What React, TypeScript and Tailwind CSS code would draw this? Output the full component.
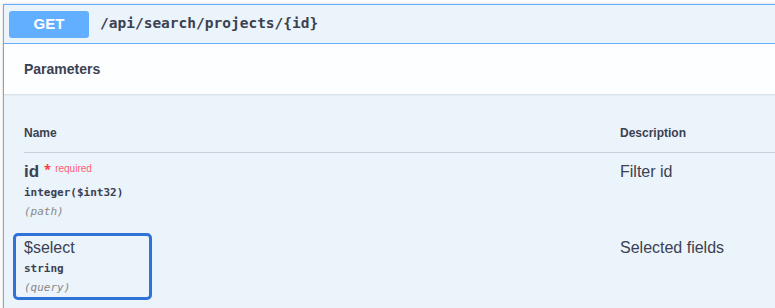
import React from 'react';

const sans = { fontFamily: '"Liberation Sans", Arial, sans-serif' };
const mono = { fontFamily: '"DejaVu Sans Mono", monospace' };

interface Param {
  name: string;
  required?: boolean;
  type: string;
  location: string;
  description: string;
  highlighted?: boolean;
}

const params: Param[] = [
  { name: 'id', required: true, type: 'integer($int32)', location: '(path)', description: 'Filter id' },
  { name: '$select', type: 'string', location: '(query)', description: 'Selected fields', highlighted: true },
];

const ParamRow: React.FC<{ param: Param }> = ({ param }) => (
  <div className="grid grid-cols-[596px_1fr] pt-[9px] pb-[9px]">
    <div className="relative">
      {param.highlighted && (
        <div className="absolute left-[-11px] top-[-5px] w-[139px] h-[67px] border-[3px] border-[#2f72d8] rounded-[5px]" />
      )}
      <div className="flex items-start h-[20px]">
        <span
          className={`text-[16px] leading-[20px] text-[#3b4151] ${param.required ? 'font-bold text-[17px]' : 'font-normal'}`}
          style={sans}
        >
          {param.name}
        </span>
        {param.required && (
          <span className="relative top-[-3px] flex items-center ml-[5px]">
            <span className="text-[13px] text-[#f93e3e] font-bold leading-[20px]">*</span>
            <span className="text-[10px] text-[#ff5f73] ml-[4px] leading-[20px]" style={sans}>
              required
            </span>
          </span>
        )}
      </div>
      <div className="mt-[3px] text-[11px] leading-[16px] font-bold text-[#3b4151]" style={mono}>
        {param.type}
      </div>
      <div className="mt-[3px] text-[11px] leading-[16px] italic text-[#888888]" style={mono}>
        {param.location}
      </div>
    </div>
    <div className="text-[16px] leading-[20px] text-[#3b4151]" style={sans}>
      {param.description}
    </div>
  </div>
);

export default function App() {
  return (
    <div className="w-[775px] h-[308px] overflow-hidden bg-white pt-[4px] pl-[3px]">
      <div className="w-[800px] h-[400px] border-l border-t border-[#61affe] bg-[#ebf3fb] shadow-[0_0_3px_rgba(0,0,0,0.19)]">
        <div className="flex items-center h-[39px] px-[5px] border-b border-[#61affe]">
          <div
            className="w-[80px] h-[27px] flex items-center justify-center rounded-[3px] bg-[#61affe] text-white text-[15px] font-bold"
            style={sans}
          >
            GET
          </div>
          <span className="ml-[11px] text-[14.5px] font-bold text-[#3b4151]" style={mono}>
            /api/search/projects/{'{id}'}
          </span>
        </div>

        <div className="h-[50px] flex items-center px-[20px] bg-white/90 shadow-[0_1px_2px_rgba(0,0,0,0.1)]">
          <h4 className="text-[14px] font-bold text-[#3b4151]" style={sans}>
            Parameters
          </h4>
        </div>

        <div className="pt-[19px] pl-[20px]">
          <div
            className="grid grid-cols-[596px_1fr] pt-[12px] pb-[11px] border-b border-[rgba(59,65,81,0.2)] text-[12px] leading-[16px] font-bold text-[#3b4151]"
            style={sans}
          >
            <div>Name</div>
            <div>Description</div>
          </div>
          {params.map((p) => (
            <ParamRow key={p.name} param={p} />
          ))}
        </div>
      </div>
    </div>
  );
}
